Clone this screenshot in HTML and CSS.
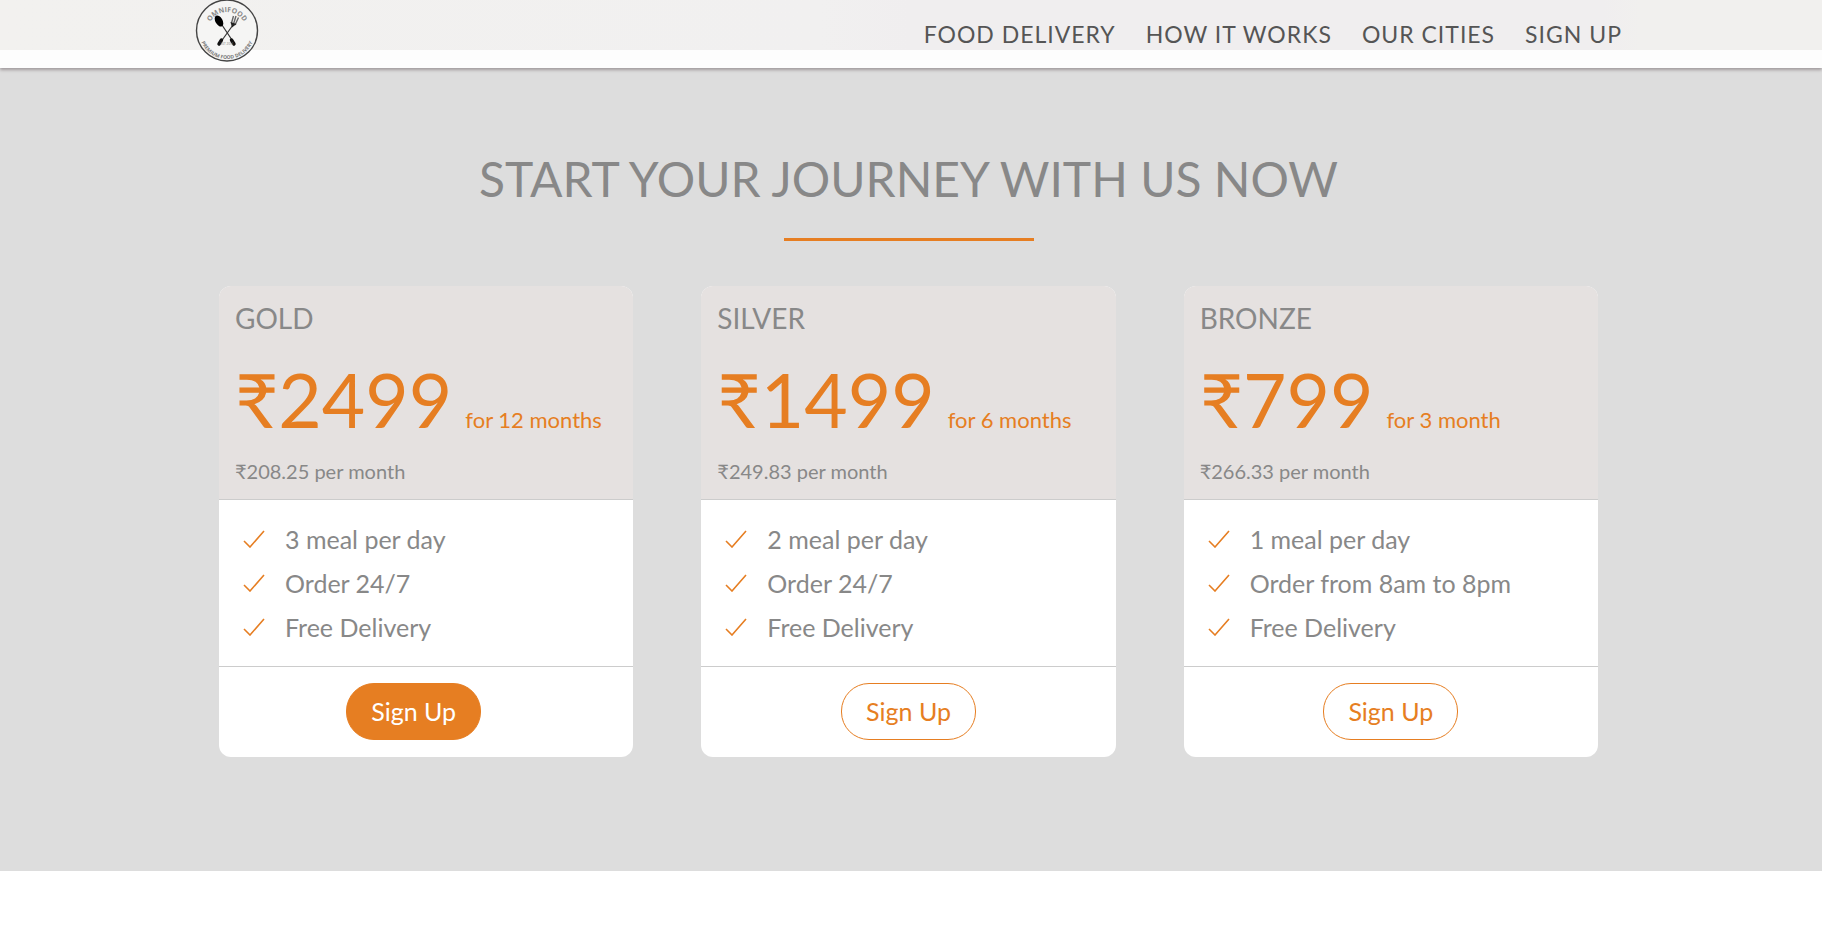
FILE: index.html
```html
<!DOCTYPE html>
<html lang="en">
<head>
<meta charset="utf-8">
<title>Omnifood</title>
<link rel="stylesheet" href="styles.css">
</head>
<body>
<svg class="sprite" aria-hidden="true">
  <symbol id="check" viewBox="0 0 22 18"><path d="M1 11 L7 17 L21 1" fill="none" stroke="currentColor" stroke-width="1.6"/></symbol>
</svg>
<header class="site-header">
  <nav class="nav">
    <a class="logo" href="#" aria-label="Omnifood">
      <svg viewBox="0 0 64 64" width="64" height="64">
        <defs>
          <path id="arc-top" d="M13 31 A19 19 0 0 1 51 31"/>
          <path id="arc-bottom" d="M4 31 A28 28 0 0 0 60 31"/>
        </defs>
        <circle cx="32" cy="30.5" r="30.5" fill="#f5f5f4" stroke="#444" stroke-width="1.4"/>
        <path d="M25 22 L39 43" stroke="#333" stroke-width="1.2"/>
        <path d="M38 25 L25 43" stroke="#333" stroke-width="1.2"/>
        <ellipse cx="24" cy="21" rx="3.600" ry="6" transform="rotate(-30 24 21)" fill="#000"/>
        <path d="M36.500 23 L38.500 16 M38.500 24 L41 16 M40 25 L43.500 17.500" stroke="#666" stroke-width="1.400"/>
        <path d="M35.500 22 L41.500 24 L37 27.500 Z" fill="#222"/>
        <path d="M26.500 40 L24 44 M36.500 40 L39 44" stroke="#111" stroke-width="3.400" stroke-linecap="round"/>
        <text class="logo-name"><textPath href="#arc-top" startOffset="50%" text-anchor="middle">OMNIFOOD</textPath></text>
        <text class="logo-est" x="32" y="45" text-anchor="middle">EST 2014</text>
        <text class="logo-tag"><textPath href="#arc-bottom" startOffset="50%" text-anchor="middle">PREMIUM FOOD DELIVERY</textPath></text>
      </svg>
    </a>
    <ul class="menu">
      <li><a href="#">Food delivery</a></li>
      <li><a href="#">How it works</a></li>
      <li><a href="#">Our cities</a></li>
      <li><a href="#plans">Sign up</a></li>
    </ul>
  </nav>
</header>
<main class="plans" id="plans">
  <h2 class="title">Start your journey with us now</h2>
  <div class="cards">
    <section class="card">
      <div class="card-head">
        <h3 class="plan">Gold</h3>
        <p class="price">₹2499 <span class="term">for 12 months</span></p>
        <p class="monthly">₹208.25 per month</p>
      </div>
      <ul class="features">
        <li><svg class="tick"><use href="#check"/></svg>3 meal per day</li>
        <li><svg class="tick"><use href="#check"/></svg>Order 24/7</li>
        <li><svg class="tick"><use href="#check"/></svg>Free Delivery</li>
      </ul>
      <div class="card-foot"><a class="btn btn-full" href="#">Sign Up</a></div>
    </section>
    <section class="card">
      <div class="card-head">
        <h3 class="plan">Silver</h3>
        <p class="price">₹1499 <span class="term">for 6 months</span></p>
        <p class="monthly">₹249.83 per month</p>
      </div>
      <ul class="features">
        <li><svg class="tick"><use href="#check"/></svg>2 meal per day</li>
        <li><svg class="tick"><use href="#check"/></svg>Order 24/7</li>
        <li><svg class="tick"><use href="#check"/></svg>Free Delivery</li>
      </ul>
      <div class="card-foot"><a class="btn" href="#">Sign Up</a></div>
    </section>
    <section class="card">
      <div class="card-head">
        <h3 class="plan">Bronze</h3>
        <p class="price">₹799 <span class="term">for 3 month</span></p>
        <p class="monthly">₹266.33 per month</p>
      </div>
      <ul class="features">
        <li><svg class="tick"><use href="#check"/></svg>1 meal per day</li>
        <li><svg class="tick"><use href="#check"/></svg>Order from 8am to 8pm</li>
        <li><svg class="tick"><use href="#check"/></svg>Free Delivery</li>
      </ul>
      <div class="card-foot"><a class="btn" href="#">Sign Up</a></div>
    </section>
  </div>
</main>
</body>
</html>
```

FILE: styles.css
```css
* { box-sizing: border-box; margin: 0; padding: 0; }

body {
  background: #fff;
  color: #888;
  font-family: Lato, "Open Sans", sans-serif;
  font-size: 25px;
}

ul { list-style: none; }
a { text-decoration: none; }
.sprite { position: absolute; width: 0; height: 0; }

.site-header {
  position: relative;
  padding-right: 5px;
  background:
    linear-gradient(90deg, #f2f1ef, #f1f0f0 45%, #f0eeef 50%, #f0eeef 88%, #f1f0ee 90%) top / 100% 50px no-repeat,
    #fdfdfd;
  box-shadow: 0 2px 3px #a09a9c;
}

.nav {
  display: flex;
  justify-content: space-between;
  align-items: flex-start;
  max-width: 1427px;
  height: 68px;
  margin: 0 auto;
}

.logo svg { display: block; }
.logo-name { font: bold 7px "Liberation Sans Narrow", "Open Sans", sans-serif; fill: #888; }
.logo-tag { font: bold 5px "Liberation Sans Narrow", "Open Sans", sans-serif; fill: #777; }
.logo-est { font: 3px "Liberation Sans Narrow", "Open Sans", sans-serif; fill: #777; }

.menu { display: flex; gap: 30px; padding-top: 18px; }
.menu a {
  color: #555;
  font-size: 23px;
  line-height: 30px;
  letter-spacing: 1px;
  text-transform: uppercase;
}

.plans { background: #ddd; padding: 81px 5px 114px 0; }

.title {
  font-size: 48px;
  font-weight: 400;
  line-height: 60px;
  text-align: center;
  text-transform: uppercase;
}
.title::after {
  content: "";
  display: block;
  width: 250px;
  height: 3px;
  margin: 29px auto 0;
  background: #e67e22;
}

.cards {
  display: grid;
  grid-template-columns: repeat(3, 1fr);
  gap: 68px;
  max-width: 1379px;
  margin: 45px auto 0;
}

.card { background: #fff; border-radius: 12px; overflow: hidden; }

.card-head {
  padding: 16px;
  background: #e5e1e0;
  border-bottom: 1px solid #ccc;
}
.plan { font-size: 28px; font-weight: 400; line-height: 32px; text-transform: uppercase; }
.price {
  display: flex;
  align-items: baseline;
  gap: 13px;
  margin-top: 17px;
  color: #e67e22;
  font-size: 75px;
  line-height: 96px;
}
.term { font-size: 22px; line-height: 30px; }
.monthly { font-size: 20px; line-height: 24px; margin-top: 12px; }

.features { padding: 17px 24px; border-bottom: 1px solid #ccc; }
.features li { display: flex; align-items: center; gap: 20px; line-height: 44px; }
.tick { width: 22px; height: 18px; color: #e67e22; }

.card-foot { display: flex; justify-content: center; padding: 16px 16px 17px; }
.btn {
  padding: 12px 24px;
  border: 1px solid #e67e22;
  border-radius: 28px;
  color: #e67e22;
  line-height: 31px;
}
.btn-full { margin-right: 25px; background: #e67e22; color: #fff; }
```
